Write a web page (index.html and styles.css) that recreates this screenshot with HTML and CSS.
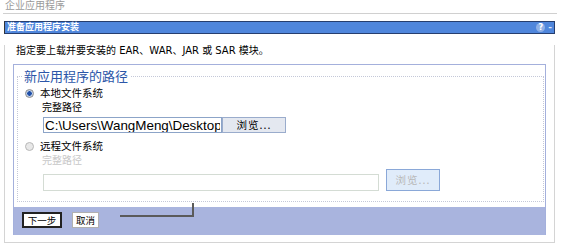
FILE: index.html
```html
<!DOCTYPE html>
<html>
  <head>
    <title>企业应用程序</title>
    <link rel="stylesheet" href="styles.css">
  </head>
  <body>
    <div class="page-title">企业应用程序</div>

    <div class="portlet">
      <div class="titlebar">
        <span class="titlebar-text">准备应用程序安装</span>
        <span class="titlebar-icons"><span class="help">?</span><span class="minimize">-</span></span>
      </div>

      <div class="portlet-body">
        <p class="instructions">指定要上载并要安装的 EAR、WAR、JAR 或 SAR 模块。</p>

        <div class="panel">
          <fieldset class="path-set">
            <legend>新应用程序的路径</legend>

            <div class="radio-row">
              <span class="radio checked"></span>
              <span>本地文件系统</span>
            </div>
            <div class="field-label">完整路径</div>
            <div class="field-row">
              <input class="path-input" type="text" value="C:\Users\WangMeng\Desktop">
              <button class="browse">浏览...</button>
            </div>

            <div class="radio-row second">
              <span class="radio"></span>
              <span>远程文件系统</span>
            </div>
            <div class="field-label disabled">完整路径</div>
            <div class="field-row remote">
              <input class="path-input wide" type="text" disabled>
              <button class="browse disabled" disabled>浏览...</button>
            </div>
          </fieldset>

          <div class="button-bar">
            <button class="btn primary">下一步</button>
            <button class="btn">取消</button>
          </div>

          <!-- stray drag line left in the screenshot -->
          <div class="drag-line"></div>
        </div>
      </div>
    </div>
  </body>
</html>
```

FILE: styles.css
```css
body {
  margin: 0;
  font-family: 'DejaVu Sans', 'Noto Sans CJK SC', sans-serif;
  font-size: 10px;
  color: #000;
  background: #fff;
}

.page-title {
  margin: 0 5px 0 3px;
  padding-left: 2px;
  height: 13px;
  line-height: 12px;
  font-size: 10px;
  color: #9a9a9a;
  border-bottom: 1px solid #d0d0d0;
}

.portlet {
  margin: 7px 7px 0 4px;
}

.titlebar {
  display: flex;
  justify-content: space-between;
  align-items: center;
  height: 11px;
  background: #4f86dc;
  border: 1px solid #263e6e;
  border-left-color: #333;
}

.titlebar-text {
  padding-left: 2px;
  font-size: 9px;
  font-weight: bold;
  line-height: 11px;
  color: #fff;
}

.titlebar-icons {
  display: flex;
  gap: 3px;
  padding-right: 2px;
  color: #dfe8f8;
  font-size: 9px;
  line-height: 9px;
  font-weight: bold;
}

.help {
  width: 9px;
  height: 9px;
  border-radius: 50%;
  background: #8fb0e6;
  color: #fff;
  text-align: center;
  font-size: 8px;
}

.portlet-body {
  border: 1px solid #d4d4d4;
  border-top: none;
  padding: 0 8px 7px 8px;
}

.instructions {
  margin: 11px 0 0 3px;
  line-height: 12px;
  font-size: 10px;
}

.panel {
  position: relative;
  margin-top: 7px;
  border: 1px solid #a4b0dc;
  border-bottom: none;
}

.path-set {
  margin: 3px 1px 0 3px;
  padding: 0 0 10px 4px;
  border: 1px dotted #c4c8d8;
}

.path-set legend {
  padding: 0 2px;
  font-family: 'Noto Sans CJK SC', sans-serif;
  font-size: 13px;
  line-height: 16px;
  color: #2c56a8;
}

.radio-row {
  display: flex;
  align-items: center;
  gap: 6px;
  margin-top: 2px;
  height: 14px;
  line-height: 14px;
  padding-left: 3px;
  font-size: 10.5px;
}

.radio-row.second {
  margin-top: 6px;
}

.radio {
  width: 7px;
  height: 7px;
  border-radius: 50%;
  border: 1px solid #b8b8b8;
  background: #e8e8e8;
}

.radio.checked {
  background: radial-gradient(circle, #1f4fa8 0 2px, #c0d0e8 2.5px);
  border-color: #8c8c8c;
}

.field-label {
  margin-left: 20px;
  height: 14px;
  line-height: 14px;
  margin-top: 1px;
  font-size: 10px;
}

.field-label.disabled {
  color: #c8c8c8;
  margin-top: 1px;
}

.field-row {
  display: flex;
  margin: 2px 0 0 21px;
}

.field-row.remote {
  align-items: flex-end;
  gap: 7px;
  margin-top: 1px;
}

.path-input {
  box-sizing: border-box;
  width: 179px;
  height: 16px;
  margin: 0;
  padding: 0 1px;
  border: 1px solid #8ca4c8;
  font-family: 'Liberation Sans', sans-serif;
  font-size: 13.4px;
  color: #000;
  background: #fff;
}

.path-input.wide {
  width: 336px;
  height: 17px;
  border-color: #d4dcd4;
}

.browse {
  box-sizing: border-box;
  height: 16px;
  width: 64px;
  margin: 0;
  padding: 0;
  border: 1px solid #9aaccc;
  background: #e4e8f0;
  font-family: 'Noto Sans CJK SC', sans-serif;
  font-size: 10.5px;
  line-height: 14px;
  letter-spacing: 1px;
  color: #000;
}

.browse.disabled {
  width: 54px;
  height: 22px;
  border-color: #8aa8d8;
  background: #e0ecfa;
  color: #b8b8b8;
}

.button-bar {
  display: flex;
  gap: 10px;
  margin-top: 5px;
  height: 28px;
  padding: 5px 0 0 8px;
  box-sizing: border-box;
  background: #a9b4de;
}

.btn {
  box-sizing: border-box;
  height: 16px;
  margin: 0;
  padding: 0 3px;
  border: 1px solid #b0b0b0;
  background: #fff;
  font-family: 'Noto Sans CJK SC', sans-serif;
  font-size: 9.5px;
  line-height: 13px;
  white-space: nowrap;
  color: #000;
}

.btn.primary {
  width: 40px;
  padding: 0;
  border: 2px solid #222;
}

.drag-line {
  position: absolute;
  left: 106px;
  top: 138px;
  width: 72px;
  height: 12px;
  border-right: 2px solid #5a5a5a;
  border-bottom: 2px solid #5a5a5a;
}
```
